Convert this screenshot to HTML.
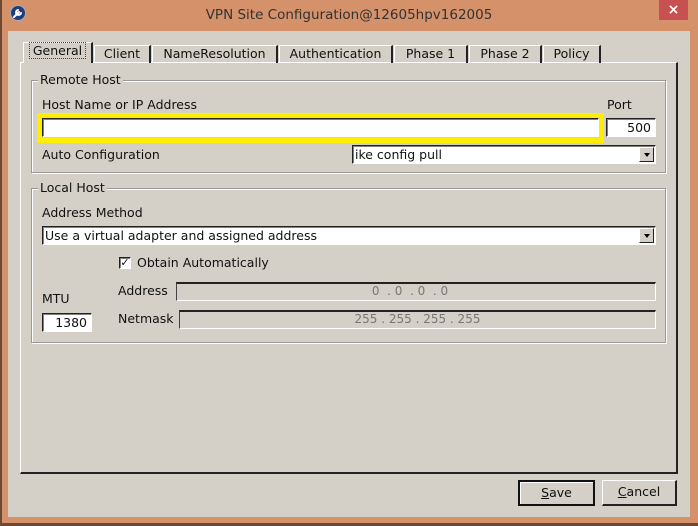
<!DOCTYPE html>
<html><head><style>
*{box-sizing:border-box;margin:0;padding:0}
body{width:698px;height:526px;background:#d4916a;position:relative;overflow:hidden;font-family:"DejaVu Sans","Liberation Sans",sans-serif;font-size:12.5px;color:#111}
.a{position:absolute}
.t{position:absolute;white-space:nowrap}
.client{left:8px;top:31px;width:682px;height:486px;background:#d4d0c8}
.in{position:absolute;background:#fff;border-top:1px solid #222;border-left:1px solid #222;border-right:1px solid #fff;border-bottom:1px solid #fff;box-shadow:inset 1px 1px 0 #808080}
.dis{position:absolute;background:#d4d0c8;border-top:2px solid #222;border-left:1px solid #444;border-right:1px solid #fff;border-bottom:1px solid #fff;color:#777;text-align:center;font-size:12px;line-height:15px}
.grp{position:absolute;border:1px solid #999;box-shadow:1px 1px 0 #fff,inset 1px 1px 0 #fff}
.lg{position:absolute;background:#d4d0c8;padding:0 2px;top:-9px;left:6px}
.tab{position:absolute;top:45px;height:18px;border-left:1px solid #fff;border-top:1px solid #fff;border-right:2px solid #222;text-align:center;line-height:16px}
.arr{position:absolute;width:15px;height:15px;background:#d4d0c8;border:1px solid #fff;border-right-color:#222;border-bottom-color:#222;right:1px;top:1px}
.arr:after{content:"";position:absolute;left:4px;top:5px;border-left:3px solid transparent;border-right:3px solid transparent;border-top:4px solid #000}
.btn{position:absolute;background:#d4d0c8;border:1px solid #fff;border-right:2px solid #222;border-bottom:2px solid #222;text-align:center;line-height:22px}
</style></head><body>
<div class="a" style="left:0;top:0;width:2px;height:526px;background:#6b4a38"></div>
<div class="a" style="left:0;top:523px;width:698px;height:3px;background:#6b4a38"></div>
<div class="a" style="left:10px;top:5px;width:16px;height:16px;border-radius:50%;background:#1f3d7a;border:1px solid #aab"></div>
<svg class="a" style="left:10px;top:5px" width="16" height="16"><path d="M4 12 L9 7 M8 5 a2.5 2.5 0 1 0 3 3" stroke="#fff" stroke-width="2" fill="none" stroke-linecap="round"/></svg>
<div class="t" style="left:0;width:698px;text-align:center;top:7px;font-size:13.5px;color:#333">VPN Site Configuration@12605hpv162005</div>
<div class="a" style="left:659px;top:0;width:29px;height:20px;background:#c75050;color:#fff;text-align:center;font-size:14px;line-height:20px;font-weight:bold">×</div>
<div class="a client"></div>
<div class="a" style="left:20px;top:62px;width:658px;height:412px;border-left:1px solid #fff;border-top:1px solid #fff;border-right:2px solid #222;border-bottom:2px solid #222"></div>
<div class="tab" style="left:23px;top:42px;width:70px;height:21px;background:#d4d0c8"><span style="border:1px dotted #444;padding:0 3px">General</span></div>
<div class="tab" style="left:94px;width:57px">Client</div>
<div class="tab" style="left:152px;width:126px">NameResolution</div>
<div class="tab" style="left:279px;width:114px">Authentication</div>
<div class="tab" style="left:394px;width:74px">Phase 1</div>
<div class="tab" style="left:469px;width:73px">Phase 2</div>
<div class="tab" style="left:543px;width:58px">Policy</div>

<div class="grp" style="left:31px;top:80px;width:635px;height:93px"><span class="lg">Remote Host</span></div>
<div class="t" style="left:42px;top:97px">Host Name or IP Address</div>
<div class="t" style="left:607px;top:97px">Port</div>
<div class="a" style="left:37px;top:113px;width:567px;height:30px;border:5px solid #ffee00"></div>
<div class="in" style="left:42px;top:118px;width:557px;height:19px"></div>
<div class="in" style="left:606px;top:118px;width:50px;height:19px;text-align:right;padding-right:4px;line-height:17px">500</div>
<div class="t" style="left:42px;top:147px">Auto Configuration</div>
<div class="in" style="left:352px;top:145px;width:304px;height:19px;padding-left:2px;line-height:17px">ike config pull<div class="arr"></div></div>

<div class="grp" style="left:31px;top:188px;width:635px;height:155px"><span class="lg">Local Host</span></div>
<div class="t" style="left:42px;top:205px">Address Method</div>
<div class="in" style="left:42px;top:226px;width:614px;height:19px;padding-left:2px;line-height:17px">Use a virtual adapter and assigned address<div class="arr"></div></div>
<div class="in" style="left:119px;top:257px;width:12px;height:12px;font-size:11px;line-height:10px;text-align:center;font-weight:bold">✓</div>
<div class="t" style="left:137px;top:255px">Obtain Automatically</div>
<div class="t" style="left:118px;top:283px">Address</div>
<div class="dis" style="left:176px;top:282px;width:480px;height:19px;padding-right:12px">0 &nbsp;. 0 &nbsp;. 0 &nbsp;. 0</div>
<div class="t" style="left:42px;top:291px">MTU</div>
<div class="in" style="left:42px;top:313px;width:50px;height:19px;text-align:right;padding-right:4px;line-height:17px">1380</div>
<div class="t" style="left:118px;top:311px">Netmask</div>
<div class="dis" style="left:179px;top:310px;width:477px;height:19px">255 . 255 . 255 . 255</div>

<div class="btn" style="left:518px;top:480px;width:77px;height:26px;border:2px solid #111;box-shadow:inset 1px 1px 0 #fff"><u>S</u>ave</div>
<div class="btn" style="left:602px;top:480px;width:75px;height:26px"><u>C</u>ancel</div>
</body></html>
